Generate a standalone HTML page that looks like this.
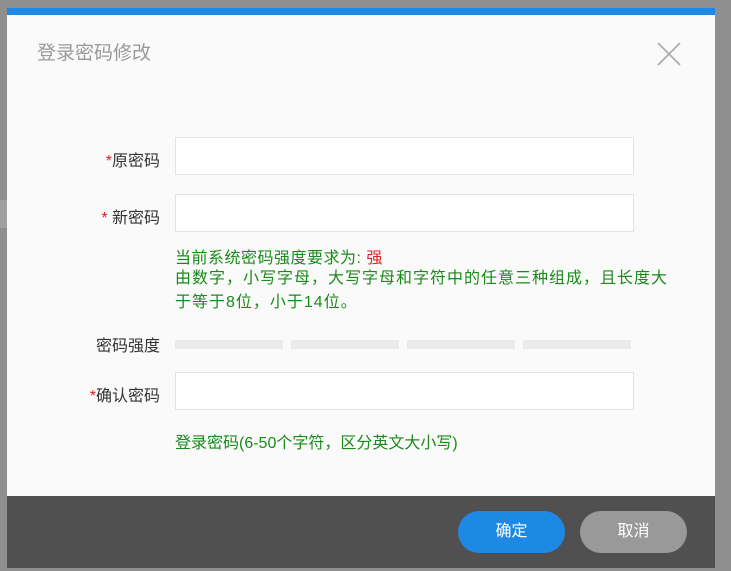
<!DOCTYPE html>
<html><head><meta charset="utf-8"><style>
body{margin:0;width:731px;height:571px;background:#8f8f8f;position:relative;overflow:hidden;font-family:"Liberation Sans","Noto Sans CJK SC",sans-serif}
.a{position:absolute}
.dlg{left:7px;top:8px;width:708px;height:560px;background:#fafafa}
.bar{left:7px;top:8px;width:708px;height:7px;background:#1e88e5}
.title{left:37px;top:38px;font-size:19px;color:#999}
.lbl{font-size:16px;color:#333;text-align:right;width:130px;left:30px}
.lbl b{color:#e02020;font-weight:normal}
.inp{left:175px;width:457px;height:36px;background:#fff;border:1px solid #e3e3e3}
.g{color:#1a8a1a;font-size:16px;left:175px;white-space:nowrap}
.sb{top:340px;height:9px;width:108px;background:#ebebeb}
.foot{left:7px;top:496px;width:708px;height:72px;background:#505050}
.btn{top:511px;width:107px;height:42px;border-radius:21px;color:#fff;font-size:16px;text-align:center;line-height:42px}
</style></head><body>
<div class="a" style="left:0;top:200px;width:7px;height:28px;background:#a0a0a0"></div>
<div class="a dlg"></div>
<div class="a bar"></div>
<div class="a title">登录密码修改</div>
<svg class="a" style="left:656px;top:41px" width="26" height="26" viewBox="0 0 26 26"><path d="M2 2L24 24M24 2L2 24" stroke="#aaa" stroke-width="1.6"/></svg>
<div class="a lbl" style="top:147px"><b>*</b>原密码</div>
<div class="a inp" style="top:137px"></div>
<div class="a lbl" style="top:204px"><b>*</b> 新密码</div>
<div class="a inp" style="top:194px"></div>
<div class="a g" style="top:244px;letter-spacing:0.5px">当前系统密码强度要求为: <span style="color:#e02020">强</span></div>
<div class="a g" style="top:267px;line-height:24px;letter-spacing:1px">由数字，小写字母，大写字母和字符中的任意三种组成，且长度大<br>于等于8位，小于14位。</div>
<div class="a lbl" style="top:332px">密码强度</div>
<div class="a sb" style="left:175px"></div>
<div class="a sb" style="left:291px"></div>
<div class="a sb" style="left:407px"></div>
<div class="a sb" style="left:523px"></div>
<div class="a lbl" style="top:382px"><b>*</b>确认密码</div>
<div class="a inp" style="top:372px"></div>
<div class="a g" style="top:429px">登录密码(6-50个字符，区分英文大小写)</div>
<div class="a foot"></div>
<div class="a btn" style="left:458px;background:#1e88e5">确定</div>
<div class="a btn" style="left:580px;background:#999">取消</div>
</body></html>
